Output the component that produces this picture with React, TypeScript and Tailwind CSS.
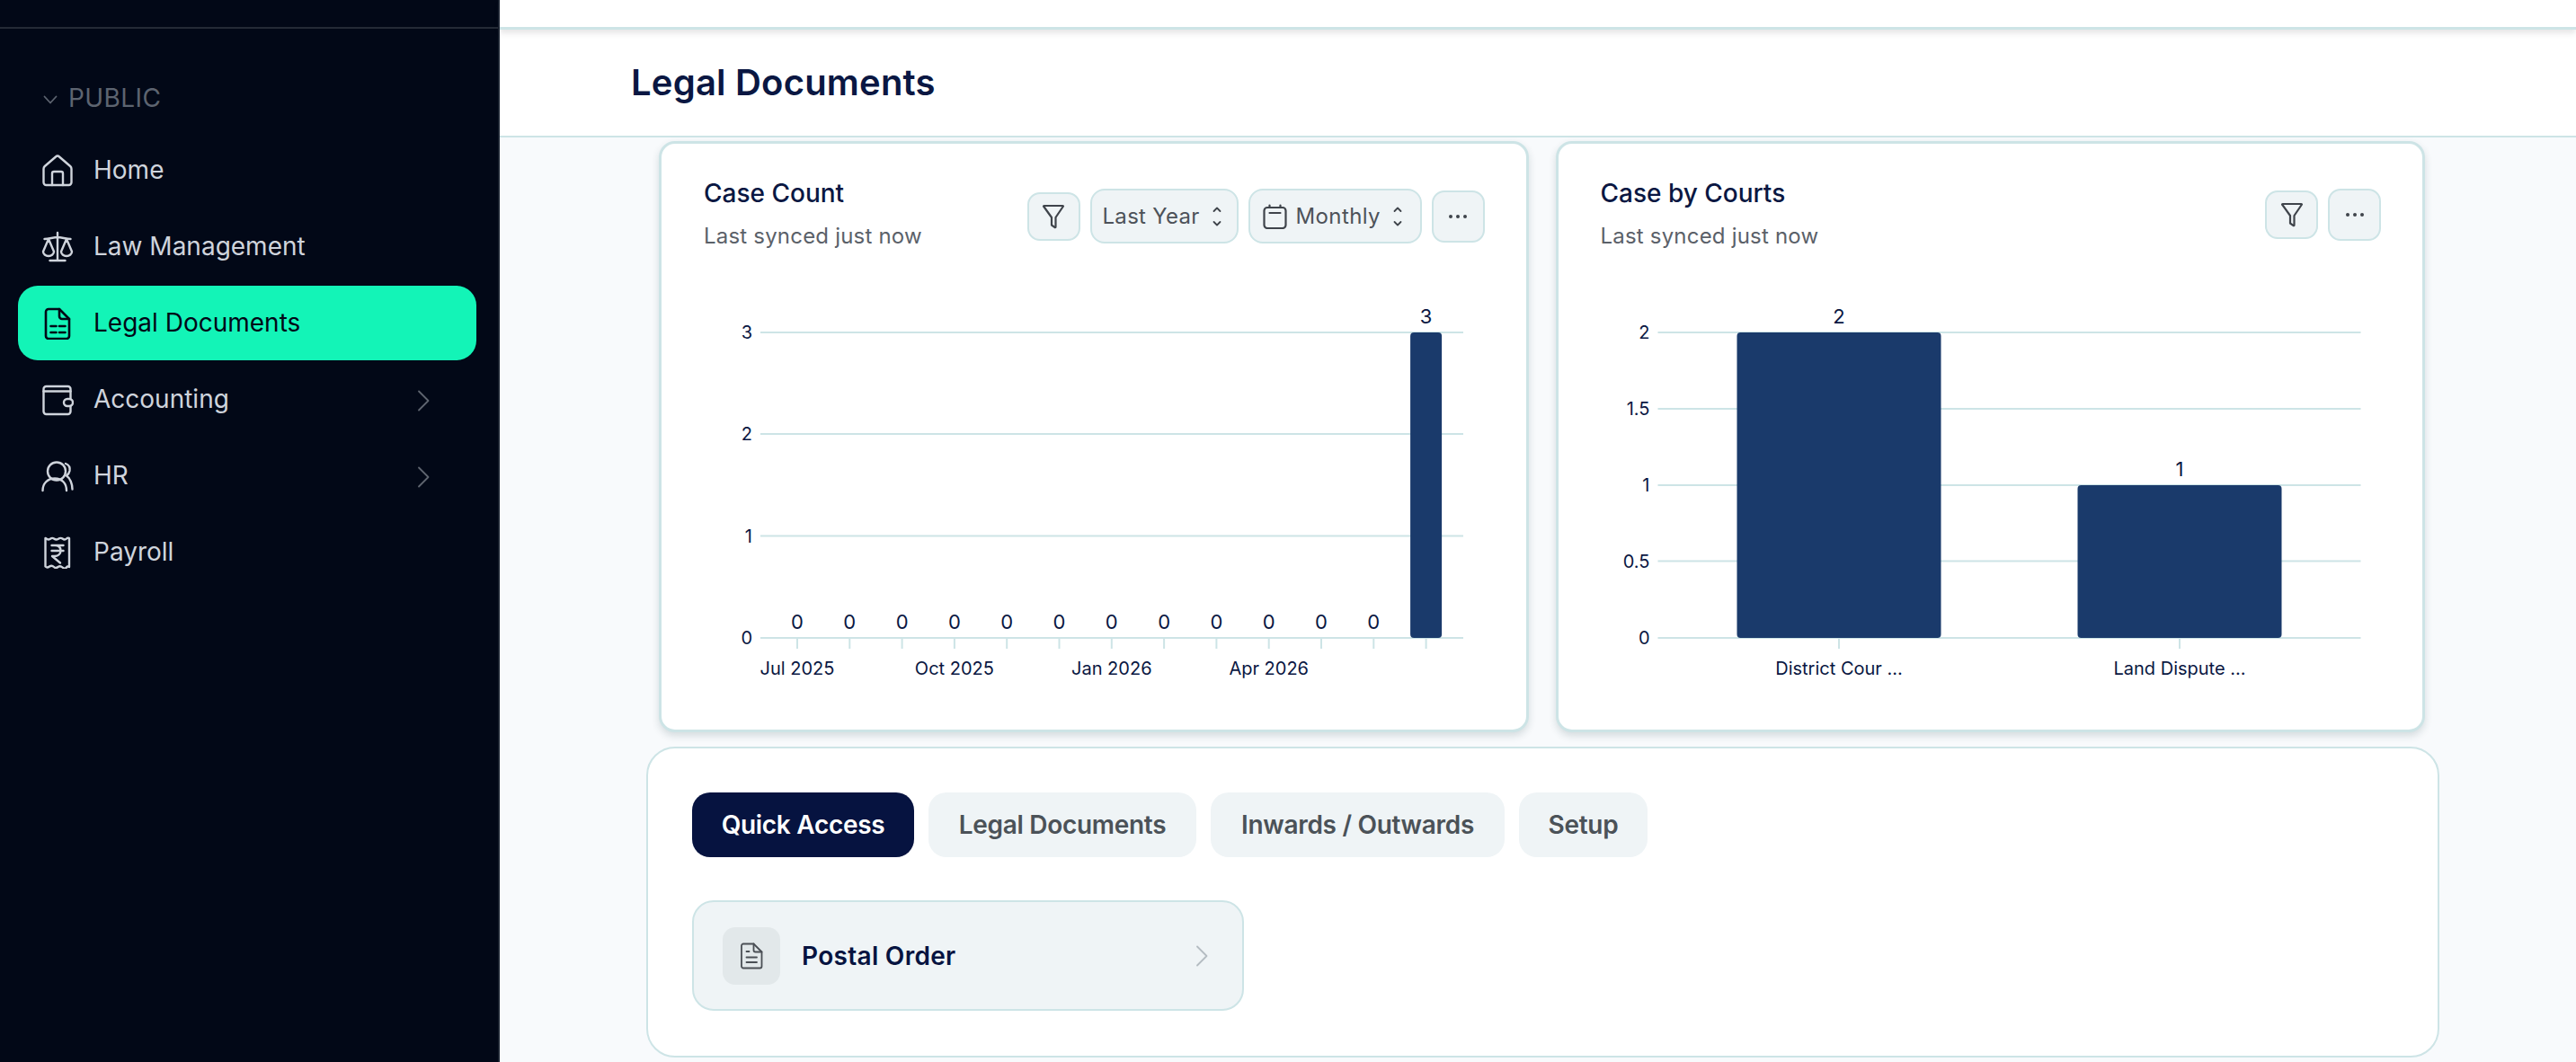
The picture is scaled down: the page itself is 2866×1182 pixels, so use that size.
function HomeIcon() {
  return (
    <svg width="36" height="36" viewBox="0 0 36 36" fill="none" stroke="currentColor" strokeWidth="2.4" strokeLinecap="round" strokeLinejoin="round">
      <path d="M2.500 16a4 4 0 0 1 1.300-3L16 2.500a3 3 0 0 1 4 0L32.200 13a4 4 0 0 1 1.300 3v15a3 3 0 0 1-3 3h-25a3 3 0 0 1-3-3z" />
      <path d="M12 34V21a2 2 0 0 1 2-2h8a2 2 0 0 1 2 2v13" />
    </svg>
  );
}

function ScaleIcon() {
  return (
    <svg width="36" height="36" viewBox="0 0 36 36" fill="none" stroke="currentColor" strokeWidth="2.4" strokeLinecap="round" strokeLinejoin="round">
      <path d="M18 2v31M9.500 33h17M3.500 9c5 0 10-2 14.500-2s9.500 2 14.500 2" />
      <path d="M8 9 2 23a6 5 0 0 0 12 0zM28 9l-6 14a6 5 0 0 0 12 0z" />
    </svg>
  );
}

function DocIcon() {
  return (
    <svg width="36" height="36" viewBox="0 0 36 36" fill="none" stroke="currentColor" strokeWidth="2.600" strokeLinecap="round" strokeLinejoin="round">
      <path d="M8 2h12l11 11v19a3 3 0 0 1-3 3H8a3 3 0 0 1-3-3V5a3 3 0 0 1 3-3z" />
      <path d="M20 2v8a3 3 0 0 0 3 3h8" />
      <path d="M10.500 21h6M20 21h6.500M10.500 28h6M20 28h6.500" />
    </svg>
  );
}

function WalletIcon() {
  return (
    <svg width="36" height="36" viewBox="0 0 36 36" fill="none" stroke="currentColor" strokeWidth="2.400" strokeLinecap="round" strokeLinejoin="round">
      <path d="M32.500 17V6a3 3 0 0 0-3-3H5.500a3 3 0 0 0-3 3v25a3 3 0 0 0 3 3h24a3 3 0 0 0 3-3v-6" />
      <path d="M2.500 8.500h30" />
      <rect x="25" y="17" width="10" height="8" rx="4" />
    </svg>
  );
}

function UsersIcon() {
  return (
    <svg width="36" height="36" viewBox="0 0 36 36" fill="none" stroke="currentColor" strokeWidth="2.400" strokeLinecap="round" strokeLinejoin="round">
      <circle cx="17" cy="12.500" r="10" />
      <path d="M1.500 34C1.500 26 7 20.500 15 20.500S28 26 28 34" />
      <path d="M27 4c4 1.500 5 5 4.500 8-.4 2-1.500 4-3.500 5.500 4 2.500 6.500 9 6.500 15" />
    </svg>
  );
}

function ReceiptIcon() {
  return (
    <svg width="36" height="36" viewBox="0 0 36 36" fill="none" stroke="currentColor" strokeWidth="2.400" strokeLinecap="round" strokeLinejoin="round">
      <path d="M5 2c2 2 3 2 4.500 1S12 1 14 2.500 17 4 18.500 3s3-2 5-.5 3 1.500 4.500 0 2-1 3-.5v32c-1-.5-2-1-3 .5s-3 1.500-4.500 0-3-2-5-.5-3 1.500-4.500 0-3-2-5-.5-3 1.500-4.500 0V2z" />
      <path d="M11.500 10h13M11.500 16h13M15 10c4.500 0 6.500 2.500 6.500 6s-3 6-7 6h-2.500l9 7.500" />
    </svg>
  );
}

function ChevronRight({ className = "" }: { className?: string }) {
  return (
    <svg className={className} width="14" height="24" viewBox="0 0 14 24" fill="none" stroke="currentColor" strokeWidth="1.800" strokeLinecap="round" strokeLinejoin="round">
      <path d="m2 1.500 10.500 10.500L2 22.500" />
    </svg>
  );
}

function FilterIcon() {
  return (
    <svg width="26" height="28" viewBox="0 0 26 28" fill="none" stroke="#3f444b" strokeWidth="2.200" strokeLinecap="round" strokeLinejoin="round">
      <path d="M2 2.500c0-.4.300-.5.600-.5h20.800c.3 0 .6.100.6.500L15.500 15v10.500c0 .8-.7.800-1.200.4L11 23.500V15z" />
    </svg>
  );
}

function UpDown() {
  return (
    <svg width="10" height="22" viewBox="0 0 10 22" fill="none" stroke="#3f444b" strokeWidth="1.800" strokeLinecap="round" strokeLinejoin="round">
      <path d="m1.500 5 3.500-3.500L8.500 5M1.500 17 5 20.500 8.500 17" />
    </svg>
  );
}

function CalendarIcon() {
  return (
    <svg width="27" height="28" viewBox="0 0 27 28" fill="none" stroke="#3f444b" strokeWidth="2.200" strokeLinecap="round" strokeLinejoin="round">
      <rect x="1.500" y="4" width="24" height="23" rx="3.500" />
      <path d="M7.500 1.500V4M19.500 1.500V4M7.500 10h12" />
    </svg>
  );
}

function Dots() {
  return (
    <svg width="22" height="6" viewBox="0 0 22 6" fill="#3f444b">
      <circle cx="3" cy="3" r="2" />
      <circle cx="11" cy="3" r="2" />
      <circle cx="19" cy="3" r="2" />
    </svg>
  );
}

function NoteIcon() {
  return (
    <svg width="26" height="30" viewBox="0 0 26 30" fill="none" stroke="#4a4f55" strokeWidth="1.800" strokeLinecap="round" strokeLinejoin="round">
      <path d="M4 1.500h11.500l9 9v16a2 2 0 0 1-2 2H4a2 2 0 0 1-2-2v-23a2 2 0 0 1 2-2z" />
      <path d="M15.500 1.500v7a2 2 0 0 0 2 2h7M7.500 10h3M7.500 16.500h11.500M7.500 22h11.500" />
    </svg>
  );
}

const nav = [
  { label: "Home", icon: <HomeIcon /> },
  { label: "Law Management", icon: <ScaleIcon /> },
  { label: "Legal Documents", icon: <DocIcon />, active: true },
  { label: "Accounting", icon: <WalletIcon />, more: true },
  { label: "HR", icon: <UsersIcon />, more: true },
  { label: "Payroll", icon: <ReceiptIcon /> },
];

function Sidebar() {
  return (
    <aside className="w-[556px] h-full shrink-0 bg-[#020817] border-r-2 border-[#1a2230]">
      <div className="h-[32px] border-b-2 border-[#242a36]" />
      <div className="pl-[48px] pt-[61px] h-[99px] flex items-start gap-[12px] text-[#5d6470]">
        <svg className="mt-[13px]" width="16" height="10" viewBox="0 0 16 10" fill="none" stroke="currentColor" strokeWidth="1.800" strokeLinecap="round" strokeLinejoin="round">
          <path d="m1.500 1.500 6.500 7 6.500-7" />
        </svg>
        <span className="text-[28px] leading-[32px] tracking-[0.4px]">PUBLIC</span>
      </div>
      <nav className="pl-[20px] w-[530px] flex flex-col gap-[2px] mt-[17px]">
        {nav.map((item) => (
          <a
            key={item.label}
            className={
              item.active
                ? "h-[83px] flex items-center pl-[26px] pr-[52px] rounded-[22px] bg-[#13f4b7] text-[#020817]"
                : "h-[83px] flex items-center pl-[26px] pr-[52px] rounded-[22px] text-[#cfd4dc]"
            }
          >
            {item.icon}
            <span className="ml-[22px] mb-[1px] text-[28px]">{item.label}</span>
            {item.more && <ChevronRight className="ml-auto text-[#5f6570] mt-[2px]" />}
          </a>
        ))}
      </nav>
    </aside>
  );
}

const base = 409;

function Chart({
  ticks,
  bars,
  labels,
  barWidth,
  x0,
  x1,
  gridTicks,
}: {
  ticks: { y: number; label: string }[];
  bars: { x: number; top: number; value: string }[];
  labels: { x: number; text: string }[];
  barWidth: number;
  x0: number;
  x1: number;
  gridTicks: number[];
}) {
  return (
    <svg className="block -ml-px" width="963.500" height="512" viewBox="0 0 963.500 512">
      {ticks.map((t) => (
        <g key={t.label}>
          <line x1={x0} x2={x1} y1={t.y} y2={t.y} stroke="#cde4e6" strokeWidth="2" />
          <text x={x0 - 9} y={t.y + 7} textAnchor="end" className="fill-[#0a1742] text-[20px]">{t.label}</text>
        </g>
      ))}
      {gridTicks.map((x) => (
        <line key={x} x1={x} x2={x} y1={base} y2={base + 12} stroke="#cde4e6" strokeWidth="2" />
      ))}
      {bars.map((b) => (
        <g key={b.x}>
          {b.top < base && <rect x={b.x - barWidth / 2} y={b.top} width={barWidth} height={base - b.top} rx="4" fill="#1a3a6b" />}
          <text x={b.x} y={b.top - 10} textAnchor="middle" className="fill-[#0a1742] text-[22px]">{b.value}</text>
        </g>
      ))}
      {labels.map((l) => (
        <text key={l.text} x={l.x} y={base + 41} textAnchor="middle" className="fill-[#0a1742] text-[20px]">{l.text}</text>
      ))}
    </svg>
  );
}

function IconButton({ children, tall }: { children: React.ReactNode; tall?: boolean }) {
  return (
    <button
      className={
        tall
          ? "w-[59px] h-[58px] flex items-center justify-center rounded-[14px] border-2 border-[#cde4e6] bg-[#eff4f6]"
          : "w-[59px] h-[54px] flex items-center justify-center rounded-[14px] border-2 border-[#cde4e6] bg-[#eff4f6]"
      }
    >
      {children}
    </button>
  );
}

function ChartCard({ title, children, controls }: { title: string; children: React.ReactNode; controls: React.ReactNode }) {
  return (
    <section className="h-[658px] rounded-[18px] border-[3px] border-[#cde4e6] bg-white shadow-[0_4px_8px_rgba(30,60,70,0.16)]">
      <div className="h-[141px] pl-[47px] pr-[46px] pt-[37px] flex justify-between items-start">
        <div>
          <h3 className="text-[28px] leading-[36px] font-medium text-[#0a1742]">{title}</h3>
          <p className="mt-[14px] text-[24px] leading-[32px] tracking-[0.2px] text-[#5b6169]">Last synced just now</p>
        </div>
        <div className="flex items-center gap-[11px] mt-[13px]">{controls}</div>
      </div>
      {children}
    </section>
  );
}

const caseTicks = [
  { y: 69, label: "3" },
  { y: 182, label: "2" },
  { y: 295.500, label: "1" },
  { y: 409, label: "0" },
];

const courtTicks = [
  { y: 69, label: "2" },
  { y: 154, label: "1.5" },
  { y: 239, label: "1" },
  { y: 323.500, label: "0.5" },
  { y: 409, label: "0" },
];

export default function App() {
  const xs = Array.from({ length: 13 }, (_, i) => 152 + i * 58.3);
  return (
    <div className="h-screen w-full flex overflow-hidden bg-[#f8fafc] font-[Inter,sans-serif]">
      <Sidebar />
      <main className="flex-1 min-w-0 flex flex-col">
        <div className="relative h-[33px] bg-white border-b-[3px] border-[#cde4e6] shadow-[0_4px_6px_rgba(60,50,60,0.12)]" />
        <header className="h-[120px] bg-white border-b-2 border-[#cde4e6] pl-[146px] flex items-center">
          <h1 className="text-[40px] font-semibold text-[#0a1742] tracking-[0.2px]">Legal Documents</h1>
        </header>
        <div className="ml-[163px] w-[1995px]">
          <div className="pl-[14px] pr-[16px] pt-[4px] grid grid-cols-2 gap-[30px]">
            <ChartCard
              title="Case Count"
              controls={
                <>
                  <IconButton><FilterIcon /></IconButton>
                  <button className="w-[165px] h-[61px] rounded-[16px] border-2 border-[#cde4e6] bg-[#eff4f6] flex items-center pl-[12px] gap-[14px] text-[24px] tracking-[0.3px] text-[#4d5259]">
                    Last Year <UpDown />
                  </button>
                  <button className="w-[193px] h-[61px] rounded-[16px] border-2 border-[#cde4e6] bg-[#eff4f6] flex items-center pl-[14px] gap-[10px] text-[24px] tracking-[0.4px] text-[#4d5259]">
                    <CalendarIcon /> Monthly <span className="ml-[4px]"><UpDown /></span>
                  </button>
                  <IconButton tall><Dots /></IconButton>
                </>
              }
            >
              <Chart
                ticks={caseTicks}
                x0={111}
                x1={893}
                barWidth={35}
                gridTicks={xs}
                bars={xs.map((x, i) => ({ x, top: i === 12 ? 69 : 409, value: i === 12 ? "3" : "0" }))}
                labels={[
                  { x: xs[0], text: "Jul 2025" },
                  { x: xs[3], text: "Oct 2025" },
                  { x: xs[6], text: "Jan 2026" },
                  { x: xs[9], text: "Apr 2026" },
                ]}
              />
            </ChartCard>
            <ChartCard
              title="Case by Courts"
              controls={
                <>
                  <IconButton><FilterIcon /></IconButton>
                  <IconButton tall><Dots /></IconButton>
                </>
              }
            >
              <Chart
                ticks={courtTicks}
                x0={111.500}
                x1={893.500}
                barWidth={227}
                gridTicks={[313, 692]}
                bars={[
                  { x: 313, top: 69, value: "2" },
                  { x: 692, top: 239, value: "1" },
                ]}
                labels={[
                  { x: 313, text: "District Cour ..." },
                  { x: 692, text: "Land Dispute ..." },
                ]}
              />
            </ChartCard>
          </div>
          <section className="mt-[16px] h-[346px] rounded-[32px] border-2 border-[#cde4e6] bg-white pl-[49px] pt-[49px]">
            <div className="flex gap-[16px] text-[28px] font-semibold tracking-[-0.3px]">
              <button className="w-[247px] h-[72px] rounded-[20px] bg-[#061340] text-white">Quick Access</button>
              <button className="w-[298px] h-[72px] rounded-[20px] bg-[#eff4f6] text-[#4b5258]">Legal Documents</button>
              <button className="w-[327px] h-[72px] rounded-[20px] bg-[#eff4f6] text-[#4b5258]">Inwards / Outwards</button>
              <button className="w-[143px] h-[72px] rounded-[20px] bg-[#eff4f6] text-[#4b5258]">Setup</button>
            </div>
            <a className="mt-[48px] w-[614px] h-[123px] rounded-[24px] border-2 border-[#cde4e6] bg-[#eff4f6] flex items-center pl-[32px] pr-[38px]">
              <div className="w-[64px] h-[64px] rounded-[14px] bg-[#e2e8ea] flex items-center justify-center"><NoteIcon /></div>
              <span className="ml-[24px] text-[28px] font-semibold tracking-[0.3px] text-[#061340]">Postal Order</span>
              <ChevronRight className="ml-auto text-[#b4bcc2]" />
            </a>
          </section>
        </div>
      </main>
    </div>
  );
}
